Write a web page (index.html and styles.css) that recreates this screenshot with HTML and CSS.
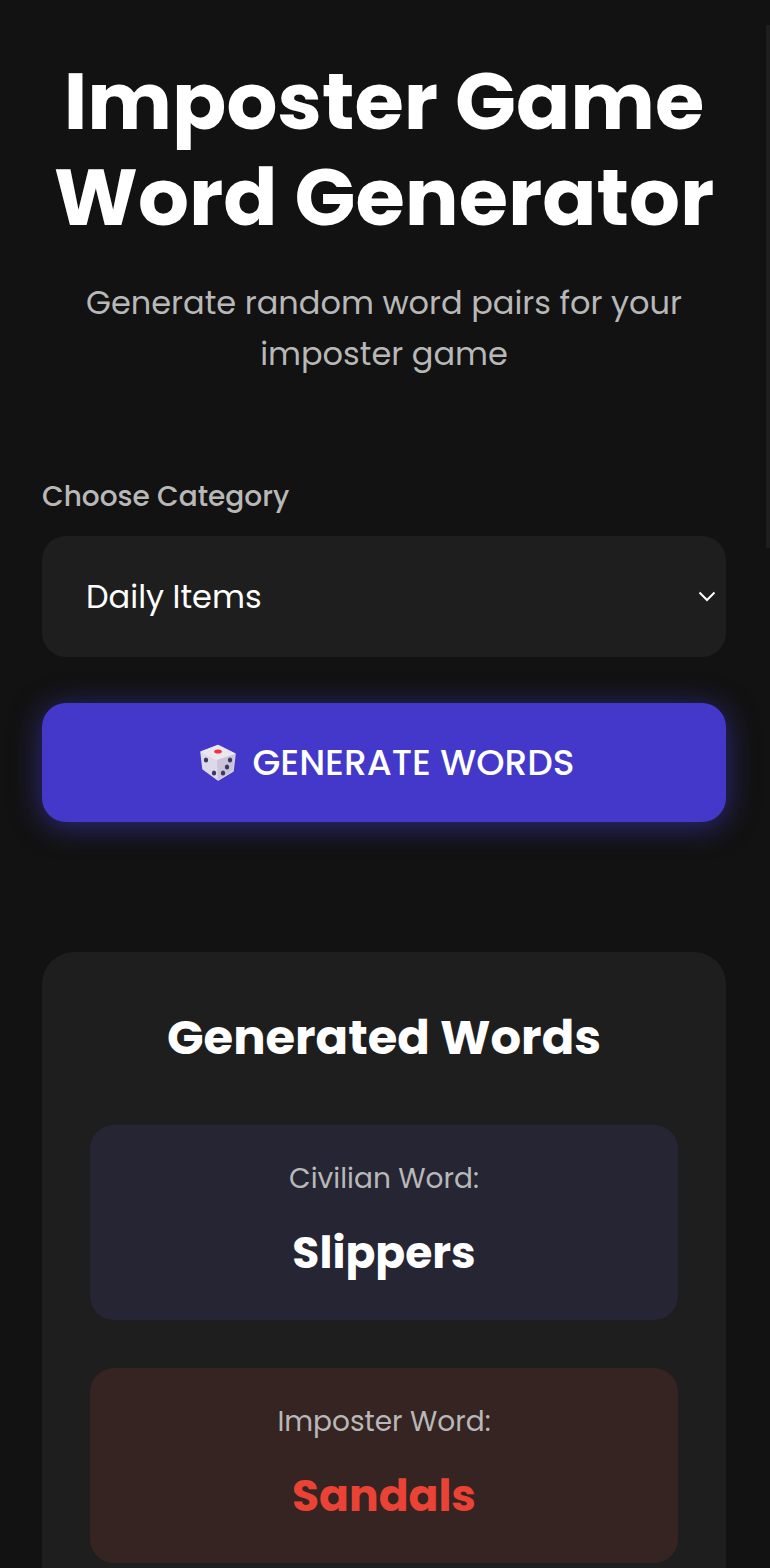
FILE: index.html
```
<!DOCTYPE html>
<html lang="en">
<head>
    <meta charset="UTF-8">
    <meta name="viewport" content="width=device-width, initial-scale=1">
    <title>Imposter Game Word Generator</title>
    <link rel="stylesheet" href="styles.css">
</head>
<body>
<div class="scrollThumb"></div>
<div class="container">
    <header class="header">
        <h1>Imposter Game Word Generator</h1>
        <p class="subtitle">Generate random word pairs for your imposter game</p>
    </header>
    <label class="fieldLabel" for="category">Choose Category</label>
    <div class="selectBox" id="category">
        <span>Daily Items</span>
        <svg class="chevron" width="18" height="11" viewBox="0 0 18 11"><path d="M1.500 1.500 9 9 16.500 1.500" fill="none" stroke="#fff" stroke-width="2"/></svg>
    </div>
    <button class="generateButton" type="button">
        <svg class="dice" width="38" height="38" viewBox="0 0 38 38">
            <path d="M19 1.500 36 10 34 27 19 36 4 25 2 8Z" fill="#ded9e8" stroke="#ded9e8" stroke-width="1.500" stroke-linejoin="round"/>
            <path d="M19 1.500 36 10 18 16 2 8Z" fill="#ebe7f1" stroke="#ebe7f1" stroke-width="1" stroke-linejoin="round"/>
            <path d="M18 16 36 10 34 27 19 36Z" fill="#cac4d8"/>
            <ellipse cx="19" cy="7.500" rx="3.800" ry="2" fill="#f0323c"/>
            <ellipse cx="7" cy="16" rx="2.200" ry="2.600" fill="#3d3768"/>
            <ellipse cx="15" cy="29" rx="2.200" ry="2.600" fill="#3d3768"/>
            <ellipse cx="31" cy="16" rx="2.200" ry="2.600" fill="#3d3768"/>
            <ellipse cx="28" cy="23" rx="2.200" ry="2.600" fill="#3d3768"/>
            <ellipse cx="24" cy="29" rx="2.200" ry="2.600" fill="#3d3768"/>
        </svg>
        <span>GENERATE WORDS</span>
    </button>
    <section class="results">
        <h2>Generated Words</h2>
        <div class="wordBox civilian">
            <p class="wordLabel">Civilian Word:</p>
            <p class="word">Slippers</p>
        </div>
        <div class="wordBox imposter">
            <p class="wordLabel">Imposter Word:</p>
            <p class="word imposterWord">Sandals</p>
        </div>
    </section>
</div>
</body>
</html>
```
FILE: styles.css
```
* {
    box-sizing: border-box;
}

html, body {
    height: 1568px;
    overflow: hidden;
}

body {
    margin: 0;
    background-color: #121212;
    color: #fff;
    font-family: Poppins, "Open Sans", "Noto Sans", sans-serif;
}

.scrollThumb {
    position: absolute;
    top: 25px;
    right: 0;
    width: 4px;
    height: 523px;
    background-color: #1e1e1e;
}

.container {
    padding: 53px 44px 0 42px;
}

.header {
    text-align: center;
    margin-bottom: 98px;
}

h1 {
    margin: 0 -10px 32px;
    font-size: 80px;
    line-height: 96px;
    font-weight: 700;
}

.subtitle {
    margin: 0 30px;
    color: #b8b8b8;
    font-size: 32px;
    line-height: 51px;
}

.fieldLabel {
    display: block;
    color: #b8b8b8;
    font-size: 28px;
    line-height: 40px;
    font-weight: 500;
    margin-bottom: 19px;
}

.selectBox {
    display: flex;
    align-items: center;
    justify-content: space-between;
    height: 121px;
    padding: 0 10px 0 44px;
    background-color: #1e1e1e;
    border-radius: 24px;
    font-size: 32px;
}

.generateButton {
    display: flex;
    align-items: center;
    justify-content: center;
    gap: 15px;
    width: 100%;
    height: 119px;
    margin-top: 46px;
    padding: 0 0 0 6px;
    border: none;
    border-radius: 24px;
    background-color: #4338ca;
    box-shadow: 0 4px 30px rgba(67, 56, 202, 0.6);
    color: #fff;
    font-family: inherit;
    font-size: 36px;
    font-weight: 500;
}

.results {
    margin-top: 130px;
    padding: 47px 48px 48px;
    background-color: #1e1e1e;
    border-radius: 32px;
    text-align: center;
}

h2 {
    margin: 0 0 49px;
    font-size: 48px;
    line-height: 77px;
    font-weight: 700;
}

.wordBox {
    height: 195px;
    padding-top: 33px;
    margin-bottom: 48px;
    border-radius: 24px;
}

.civilian {
    background-color: #252533;
}

.imposter {
    background-color: #352422;
}

.wordLabel {
    margin: 0 0 19px;
    color: #b8b8b8;
    font-size: 28px;
    line-height: 42px;
}

.word {
    margin: 0;
    font-size: 44px;
    line-height: 68px;
    font-weight: 700;
}

.imposterWord {
    color: #ea4335;
}
```
